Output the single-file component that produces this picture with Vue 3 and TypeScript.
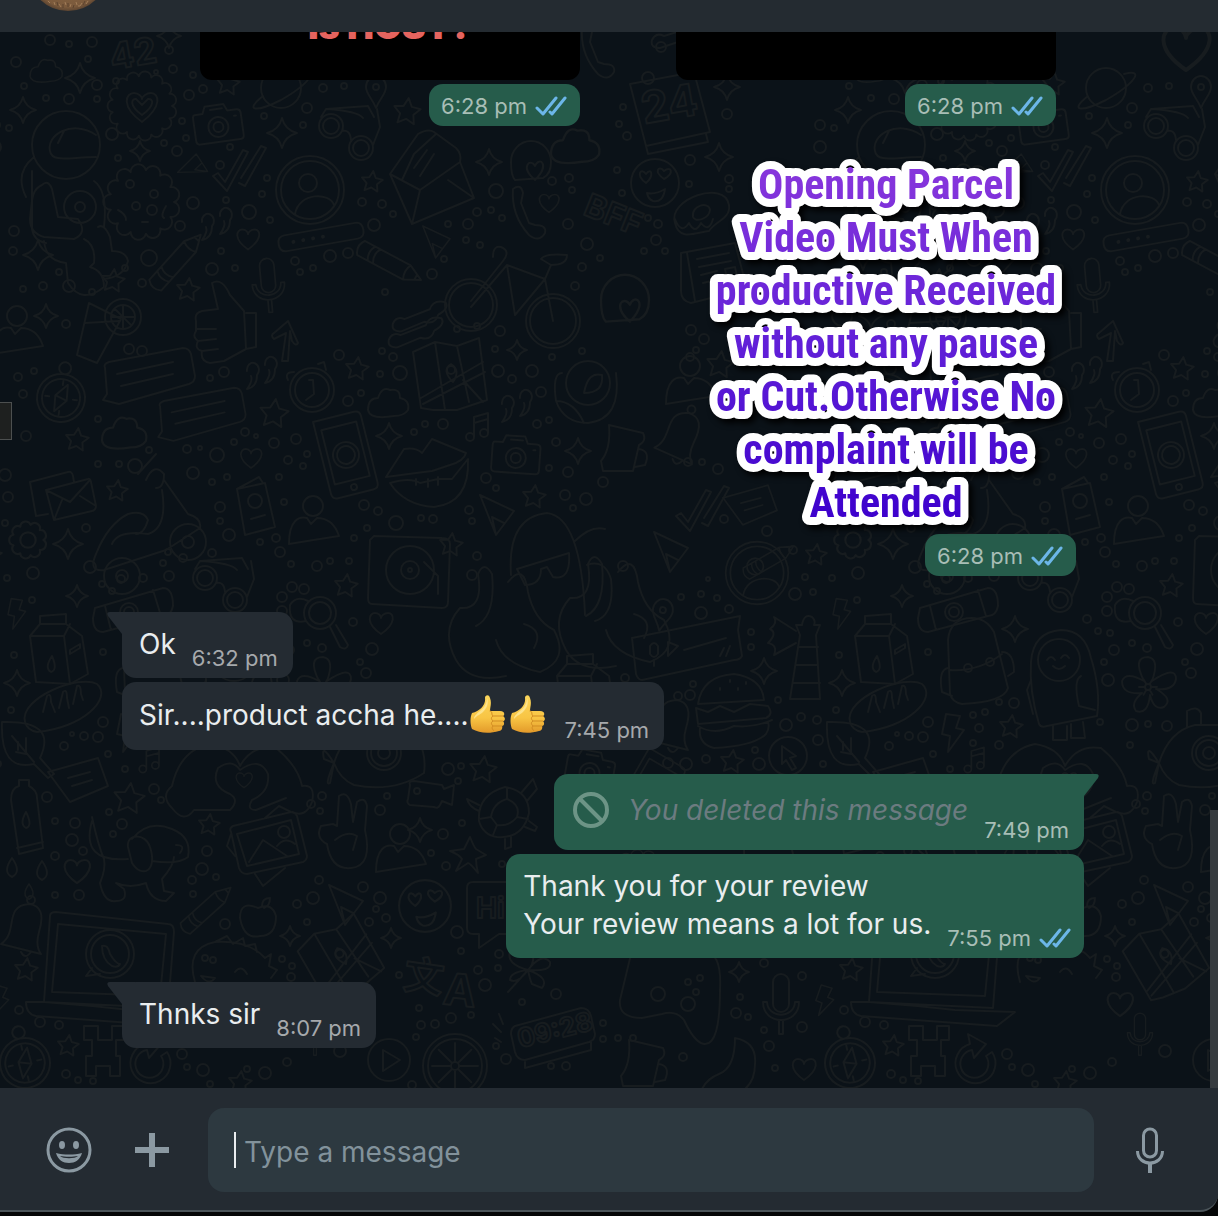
<script setup lang="ts">
import { ref } from 'vue'

interface Message {
  id: number
  side: 'in' | 'out'
  lines: string[]
  time: string
  tail?: boolean
  thumbs?: number
  deleted?: boolean
  read?: boolean
}

const messages: Message[] = [
  { id: 1, side: 'in', lines: ['Ok'], time: '6:32 pm', tail: true },
  { id: 2, side: 'in', lines: ['Sir....product accha he....'], time: '7:45 pm', thumbs: 2 },
  { id: 3, side: 'out', lines: ['You deleted this message'], time: '7:49 pm', tail: true, deleted: true },
  { id: 4, side: 'out', lines: ['Thank you for your review', 'Your review means a lot for us.'], time: '7:55 pm', read: true },
  { id: 5, side: 'in', lines: ['Thnks sir'], time: '8:07 pm', tail: true },
]

const stickerLines = [
  'Opening Parcel',
  'Video Must When',
  'productive Received',
  'without any pause',
  'or Cut.Otherwise No',
  'complaint will be',
  'Attended',
]

const draft = ref('')

/* Wallpaper: line doodles on a tile that repeats sideways. */
const TILE = 825

function starPath(r: number): string {
  const pts: string[] = []
  for (let i = 0; i < 10; i++) {
    const rad = i % 2 ? r * 0.5 : r
    const a = (Math.PI / 5) * i - Math.PI / 2 + 0.12
    pts.push(`${(Math.cos(a) * rad).toFixed(1)} ${(Math.sin(a) * rad).toFixed(1)}`)
  }
  return `M${pts.join('L')}Z`
}
function sparklePath(r: number): string {
  const k = r * 0.2
  return `M0 ${-r}Q${k} ${-k} ${r} 0Q${k} ${k} 0 ${r}Q${-k} ${k} ${-r} 0Q${-k} ${-k} 0 ${-r}Z`
}
function ring(cx: number, cy: number, r: number): string {
  return `M${cx - r} ${cy}a${r} ${r} 0 1 0 ${2 * r} 0a${r} ${r} 0 1 0 ${-2 * r} 0Z`
}
function scallop(n: number, r: number): string {
  let d = `M${r} 0`
  for (let i = 1; i <= n; i++) {
    const a = (2 * Math.PI * i) / n
    const s = (Math.PI * r) / n
    d += `A${s.toFixed(1)} ${s.toFixed(1)} 0 0 1 ${(Math.cos(a) * r).toFixed(1)} ${(Math.sin(a) * r).toFixed(1)}`
  }
  return d + 'Z'
}
function spokes(n: number, r0: number, r1: number): string {
  let d = ''
  for (let i = 0; i < n; i++) {
    const a = (2 * Math.PI * i) / n
    d += `M${(Math.cos(a) * r0).toFixed(1)} ${(Math.sin(a) * r0).toFixed(1)}L${(Math.cos(a) * r1).toFixed(1)} ${(Math.sin(a) * r1).toFixed(1)}`
  }
  return d
}

const heart = 'M0 11C-16 0 -12 -10 -6 -10C-2 -10 0 -7 0 -5C0 -7 3 -10 7 -10C13 -10 16 0 0 11Z'
const pin = 'M0 16C-4 6 -10 2 -10 -5A10 11 0 0 1 10 -5C10 2 4 6 0 16Z' + ring(0, -5, 3)

const shapes: Record<string, string> = {
  heart,
  pin,
  badge: scallop(15, 30) + 'M0 16C-22 0 -16 -13 -8 -13C-3 -13 0 -9 0 -7C0 -9 4 -13 9 -13C17 -13 21 0 0 16ZM0 9C-14 -1 -10 -8 -6 -7L0 -1L6 -7C11 -8 14 -1 0 9Z',
  camera: 'M-22 -12L-14 -12L-11 -19L8 -19L11 -12L20 -12Q24 -12 24 -8V14Q24 18 20 18H-20Q-24 18 -24 14V-8Q-24 -12 -22 -12Z' + ring(0, 3, 10) + ring(0, 3, 5) + 'M-6 -15H6M17 -6H19',
  avatar: ring(0, 0, 34) + ring(0, 0, 29) + ring(-2, -7, 9) + 'M-15 24C-11 2 20 2 24 15',
  glasses: ring(-17, -7, 12) + ring(-17, -7, 8) + ring(13, 15, 12) + ring(13, 15, 8) + 'M-6 -2Q2 -4 3 7M-27 -16L-22 -24L20 -27L26 -16M25 12L32 -6L29 -24M-22 -24Q10 -22 15 -15',
  envelopeOpen: 'M-42 -2L-14 -42Q-4 -48 2 -44L24 -28Q30 -22 28 -14L42 22L-20 48ZM-42 -2L-12 14L28 -14M-12 14L-20 48M16 4L42 22M-30 4L-18 -22L4 -42M-18 -8L-5 -26M-12 0L2 -22',
  envelope: 'M-32 -12L6 -22Q10 -23 11 -18L12 -12M-32 -12L-26 22L-14 20M-16 -4L26 -15Q28 -16 29 -12L34 12Q34 16 30 17L-8 26ZM-16 -4L8 8L28 -14M-8 26L0 6M34 12L18 2',
  pencil: 'M-8 34L-8 -18L0 -34L8 -18L8 34Q0 40 -8 34ZM-8 22Q0 27 8 22M-8 16Q0 21 8 16M-8 -18Q0 -14 8 -18M-3 -28H3',
  mic: 'M-8 -16A8 8 0 0 1 8 -16V6A8 8 0 0 1 -8 6ZM-18 4C-18 28 18 28 18 4L14 4C13 21 -13 21 -14 4ZM-2 22V36H2V22',
  checks: 'M-26 8L-21 5L-14 14L4 -18L9 -16L-12 23ZM2 10L22 -22L27 -20L6 18L0 15',
  astronaut: ring(0, -34, 34) + 'M-16 -28C-20 -44 6 -60 30 -44M-16 -28C-14 -16 4 -22 30 -22M-8 -36L-2 -48M-32 -22Q-52 -6 -40 18M-34 -8V50Q-32 62 -20 64M-24 6C-34 10 -34 20 -36 40Q-36 54 -22 58L8 60Q22 54 12 40L-8 38L-14 10Q-18 0 -24 6M-22 62Q-20 82 0 84L2 104Q16 126 38 108Q38 92 24 88L28 84Q30 66 18 60M38 100Q58 98 62 82Q60 72 46 72L44 58Q38 44 32 48M28 2Q42 12 38 48' + ring(14, 28, 16) + ring(14, 28, 5),
  cookie: scallop(13, 32) + ring(-12, -18, 4) + ring(12, -8, 4) + ring(-6, 4, 4) + ring(10, 8, 5) + 'M-24 8Q-16 12 -16 18M24 4Q18 14 22 16M0 20H6',
  capsule: 'M-36 -8H36Q43 -8 43 0T36 8H-36Q-43 8 -43 0T-36 -8Z' + ring(-28, 0, 1) + ring(-18, 0, 1) + ring(-8, 0, 1) + ring(2, 0, 1),
  bicycle: ring(-40, 18, 26) + ring(-40, 18, 22) + ring(42, 34, 27) + ring(42, 34, 23) + 'M-40 20L-4 -22L34 -8L42 34M-4 -22L4 28L34 -8M-40 14L-8 -26Q0 -36 -10 -40Q-18 -42 -18 -30M30 -28Q34 -34 56 -32Q56 -22 40 -22ZM40 -22L34 -8',
  handset: 'M-16 -24Q-8 -30 -6 -20L-8 -10L0 10L6 12Q18 12 16 20Q10 30 0 22Q-18 2 -16 -24Z',
  earsFace: 'M-20 0A20 21 0 0 1 20 0Q20 12 12 16L-16 18Q-20 14 -20 0ZM4 18C-12 4 0 -4 4 4C8 -6 20 2 4 18Z',
  calendar: 'M-36 -26L28 -38L44 22L-20 36ZM-20 36L-18 44L42 32L40 24' + ring(-18, -32, 6),
  smiley: ring(0, 0, 24) + 'M-9 0C-20 -8 -14 -16 -9 -9C-4 -16 0 -8 -9 0ZM9 -4C-2 -12 4 -18 9 -12C16 -18 20 -10 9 -4ZM-8 10Q0 12 10 6Q8 20 -2 18Q-7 16 -8 10Z',
  donut: 'M-26 10C-34 -14 24 -34 28 -8C30 6 14 8 8 18C-6 20 -22 28 -26 10ZM-8 4C-10 -8 8 -12 9 -3C8 6 -6 10 -8 4ZM-26 6Q-20 22 -12 10Q-6 22 0 10Q8 20 12 6',
  newspaper: 'M-32 -14L22 -24L34 22L-22 36Q-32 34 -32 24ZM-26 -14L-18 34M-16 -8L16 -14M-14 0L18 -6M-12 8L4 4M-10 16L6 12M12 2L22 0L25 14L15 16Z',
  planet: ring(0, 0, 20) + 'M-18 8C-38 24 -24 24 0 12C28 -4 40 -20 18 -14',
  compass: ring(0, 0, 24) + ring(0, 0, 19) + ring(0, -30, 6) + 'M5 -14L6 2L-5 14L-6 -2ZM-6 -2L6 2M-16 0H-12M12 0H16M0 -17V-13M0 17V13',
  cocktail: 'M-8 -30L24 -14L0 30L-20 22ZM-12 -10L22 -12' + ring(26, -16, 18) + ring(26, -16, 12) + 'M26 -28V-4M14 -16H38M18 -24L34 -8',
  thumb: 'M-30 -14Q-32 -22 -24 -24L-8 -26L-14 -52Q-4 -58 4 -40L18 -24L20 14L-2 26L-16 28Q-26 26 -24 16Q-32 14 -28 6Q-34 2 -30 -4ZM-28 6L-10 4M-24 16L-8 14M-30 -6L-10 -6M20 -22H30V12L20 14',
  talk: 'M-42 -14Q-44 -18 -38 -20L36 -34Q42 -34 44 -28L48 -6Q48 0 42 2L-28 22L-44 18L-40 12ZM-30 -8L26 -20M-26 4L26 -8',
  quotes: 'M-12 -2A6 7 0 1 1 -2 2Q-2 14 -12 16Q-6 8 -8 3M6 -8A6 7 0 1 1 16 -4Q16 8 6 10Q12 2 10 -3',
  stopwatch: ring(0, 0, 22) + ring(0, 0, 17) + 'M-3 -10L1 -10L2 4L-6 10M-24 -10Q-28 -18 -18 -18M6 -26L12 -28L14 -20',
  cloud: 'M-20 8Q-20 -4 -10 -4Q-6 -16 2 -12Q12 -14 12 -4Q22 -2 20 8Q16 14 6 14Q-18 18 -20 8Z',
  map: 'M-36 -24L-14 -34L8 -30L30 -38L38 24L8 34L-16 34L-28 32ZM-14 -34L-4 34M8 -30L20 26M-28 22L34 -14M-26 28L36 -4M14 4L34 26' + ring(2, -6, 4) + 'M4 6Q-8 -6 2 -12Q12 -6 4 6',
  phone: 'M-24 -40L18 -40Q24 -40 24 -34V34Q24 40 18 40H-18Q-24 40 -24 34ZM-18 -30H18V26H-18Z' + ring(0, 0, 13) + ring(0, 0, 9) + ring(0, 33, 3),
  lips: 'M-44 4L-26 -24Q-14 -26 -8 -20L2 -34L36 -20Q34 -12 20 -8L2 -2L-14 0ZM-40 10Q-20 4 -10 10L8 6L22 6L38 -14Q40 30 4 34Q-26 32 -40 10ZM-14 6V12M-2 6V14M8 4V12',
  gear: scallop(9, 14) + ring(0, 0, 7),
  passport: 'M-18 -18L10 -24L20 20L-10 28ZM-18 -18L4 -30L8 -24' + ring(0, -6, 7) + 'M-4 12L10 8',
  person: ring(0, -14, 10) + 'M-24 24C-24 0 -14 -4 -6 -2L-2 4L4 -2C14 -2 22 4 26 16Q0 20 -24 24Z',
  turntable: 'M-36 -34L32 -32Q40 -32 40 -26L38 32Q38 38 32 38L-38 34Q-42 34 -42 28L-40 -30Z' + ring(0, 0, 24) + ring(0, 0, 9) + ring(0, 0, 2) + 'M14 -8L28 6V24',
  headShades: 'M-34 20Q-38 -38 2 -42Q36 -38 40 60M-28 14L24 -2Q26 26 8 22L2 12L-4 14Q-4 30 -20 30ZM30 -14Q46 -30 60 -26M42 10Q60 4 66 24Q70 60 50 66',
  triangle: 'M-14 -20L20 -4L2 20ZM-2 2L2 20M-2 2L10 8',
  rose: ring(0, -10, 22) + 'M-26 -20Q-36 -20 -32 8Q-24 30 0 30Q34 26 28 -20M-32 8Q-14 8 -4 30M-4 0Q0 -22 14 -18Q16 0 -4 0',
  arrow: 'M-2 24L2 -4L-10 2Q-14 -2 -10 -4L4 -16L14 6Q12 10 8 4L6 -6L4 24Z',
  wrench: 'M-28 10Q-24 2 -16 6L10 -2Q14 -12 26 -8Q30 -2 18 4Q14 14 4 10L-20 18Q-30 18 -28 10Z',
  scooter: 'M-10 -40L8 -60M-2 -34Q6 -52 16 -40Q16 -26 8 -26M16 -34L40 0Q54 4 52 14L18 36L-44 56Q-60 58 -52 40Q-40 10 -20 0Q-4 -4 0 6Q-4 20 -12 20M14 -24Q20 14 0 20Q-30 16 -36 30' + ring(40, 28, 18) + ring(40, 28, 6) + ring(-26, 62, 18) + ring(-26, 62, 6),
  note: ring(-8, 10, 4) + ring(6, 6, 4) + 'M-4 10V-10L10 -14V6M-4 -4L10 -8',
  lighthouse: 'M-16 42L-6 -22L-10 -32H-4Q-2 -44 6 -40Q10 -36 8 -32H14L10 -22L14 42ZM-8 -10H12M-10 8H12M-12 26H14M-10 -26L-32 -40Q-28 -34 -36 -28Q-28 -24 -38 -14Q-28 -12 -32 -2L-10 -14',
  milk: 'M-28 -14L-18 -26H8L24 -14L30 24L12 34L-22 32ZM-28 -14L6 -14L12 34M6 -14L12 -26M-18 -26V-34L8 -36V-26M-6 6Q-14 18 -7 22Q0 20 -6 6ZM12 0L22 -6V-2L12 4Z',
  bread: 'M-38 16C-44 -8 16 -32 34 -22C50 -8 20 22 -26 26Q-36 24 -38 16ZM-20 6L-16 -10Q-12 -14 -12 -4L-8 6M-4 2L0 -14Q4 -18 4 -8L6 2M10 -2L14 -20Q18 -22 18 -12L20 -6',
  backpack: 'M-26 -20Q-24 -42 -2 -42Q12 -42 20 -28L34 28Q30 42 -12 44Q-22 42 -24 34ZM-24 10Q4 12 28 -6M-26 8Q-36 10 -32 32L-22 36M28 -8Q40 -8 40 12L34 16' + ring(-6, 8, 4) + ring(16, 2, 4),
  spaceman: 'M-22 44Q-32 10 -30 -18Q-28 -48 0 -50Q24 -50 30 -22Q40 10 36 36L-14 46Q-20 48 -22 44Z' + ring(-2, -20, 21) + 'M-14 -20Q-10 -26 -6 -20M0 -22Q4 -28 8 -22M-8 -14Q-2 -8 4 -14M-8 46V60H6V46M10 44V58H24L22 42M20 -4Q12 0 18 26L34 30M-30 0L-34 10L-28 34',
  flower: 'M-4 -6Q-16 -30 0 -30Q12 -28 4 -6Q28 -22 28 -8Q26 4 8 2Q26 12 16 20Q6 24 2 8Q0 28 -12 24Q-18 16 -6 6Q-26 8 -26 -6Q-22 -16 -4 -6Z' + spokes(6, 4, 9) + ring(0, 0, 3),
  burger: 'M-36 -10Q-32 -38 0 -40Q28 -36 30 -14ZM-38 -6L-26 -2L-14 -8L0 -2L16 -10L34 -8Q40 0 32 4L-36 10ZM-36 12Q-20 22 0 12Q20 14 38 6M-34 14Q-36 30 -20 34Q20 32 32 20Q36 14 34 8M-14 -24V-26M-4 -32V-34M4 -24V-26M12 -30V-32',
  bell: 'M-24 12C-6 0 -22 -26 4 -28Q22 -26 14 0Q10 14 16 22ZM-4 20Q0 28 6 20' + ring(6, -32, 4),
  leaf: 'M-26 -28Q30 -30 12 8L26 24L20 28L6 14Q-28 22 -26 -28ZM-16 -14L6 12M-10 -8V0M-2 -12V4L-12 2',
  bolt: 'M-6 -18L8 -16L4 -4L12 -2L-4 20L-2 4L-10 2Z',
  voice: 'M-54 -14L54 -36L52 -22L56 4Q54 8 48 8L-44 28Q-48 28 -50 22ZM-36 -6V2Q-32 8 -28 2V-6Q-32 -12 -36 -6M-32 8V14M-18 -10V4L-8 -6ZM-2 -2L40 -14M34 4L38 -4M40 4L44 -6',
  cursor: ring(0, 0, 19) + 'M-6 -10L8 0L2 2L8 12L4 14L-2 4L-6 8Z',
  submarine: ring(0, 0, 17) + ring(0, 0, 13) + ring(0, 0, 6) + 'M-50 10Q-40 -22 -14 -28H20Q44 -10 40 20Q10 40 -30 32Q-44 26 -50 10M-22 -26V-42Q-12 -48 -8 -40V-28M-50 10Q-64 -12 -60 6ZM-50 10Q-60 34 -54 30Z',
  magnifier: ring(0, 0, 16) + ring(0, 0, 11) + 'M10 14L20 34Q26 38 28 32L16 12M-14 8Q-32 12 -30 -8Q-24 -18 -12 -12' + ring(-38, -2, 5) + ring(-38, -16, 5) + ring(-28, -26, 5) + ring(-16, -24, 5),
  roll: 'M-38 -4L30 -24Q40 -24 40 -6Q38 4 30 4L-30 20Q-40 20 -40 6ZM-28 -6L-22 18M20 -22L28 4' + ring(-4, 0, 9) + ring(-4, 0, 5),
  bottle: 'M-16 -20Q-16 -32 -8 -34V-40H2L2 -34Q10 -30 10 -22L16 28L-8 34ZM-10 28L16 22M-1 -8Q-8 4 -1 8Q6 6 -1 -8Z',
  card: 'M-30 -8L20 -22L30 6L-8 22ZM-10 -2L12 -8M-6 6L14 0',
  dog: 'M-50 -36Q-62 6 -14 2M-50 -40Q-44 -12 -38 2Q-36 12 -42 26Q-38 46 -26 44Q-14 44 -18 32L-26 26Q-12 32 4 26Q8 44 24 44L32 36L22 34L20 22Q32 8 32 0M-14 -10C-16 -24 4 -24 8 -10C16 14 0 22 -10 6ZM-10 -18Q6 -38 30 -28Q50 -20 46 0Q36 8 10 4M34 -12Q44 -12 38 -4',
  picture: 'M-36 -16Q-38 -20 -34 -22L24 -36Q28 -36 30 -32L40 8Q40 12 36 14L-20 26Q-26 26 -28 20ZM-30 -14L24 -28L32 6L-20 18ZM-18 14L-4 -8L20 8M10 -2Q18 -12 28 -4' + ring(17, -16, 6) + 'M-2 -30L12 -42L24 -36M-32 8L-40 -2L-36 -14M-12 26L-4 38L18 20',
  victory: 'M-20 4Q-32 -2 -26 -14L-14 -16L-10 -14L-8 -44Q0 -50 4 -36L6 -18L10 -38Q18 -44 20 -34L18 -10Q26 26 4 28Q-16 30 -20 4ZM-12 0Q0 -10 10 -4L6 10',
  camcorder: 'M-20 -12Q-22 -16 -16 -16L12 -12L14 -8L24 -12L22 8L12 4L10 8Q8 12 4 10L-20 8Q-24 6 -22 2Z' + ring(-13, -6, 3),
  turtle: 'M-26 8Q-28 -18 0 -26Q24 -22 24 0Q18 26 -8 24Q-22 22 -26 8ZM-14 4Q-12 -10 2 -14Q16 -8 12 4Q4 14 -8 12ZM-14 4L-26 6M2 -14V-25M12 4L23 6M-8 12L-12 22M-26 -8L-38 -14Q-36 -6 -26 -2M16 -20L28 -34L32 -24L22 -12M0 26V36L6 34V24M24 8L32 14L30 18L20 14',
  starfish: 'M2 -18Q6 -8 8 -6L18 0L8 4Q8 10 10 18Q2 8 0 8L-12 16L-6 4Q-8 0 -18 -4L-4 -6Z',
  drop: 'M0 -10Q-10 4 0 9Q10 4 0 -10Z',
  laptop: 'M-60 -42Q-60 -46 -54 -46L58 -34Q64 -34 64 -26L58 50L-66 44ZM-52 -34L56 -24L50 38L-58 34ZM-66 44L-84 44Q-84 56 -74 58L62 68L80 54L20 52L-18 48Z' + ring(0, -4, 24) + ring(0, -4, 19) + 'M-18 10L-24 18L-10 16M-8 -12Q-2 -14 0 -4Q6 6 10 6Q8 10 2 8Q-8 2 -8 -12Z',
  dino: 'M-40 12Q-50 -22 -20 -28Q14 -30 30 -12L36 -16L34 -4L42 0L36 8M-20 -28L-8 -34L-2 -26L8 -32L10 -24L20 -26L22 -18M-34 6Q-26 16 -20 8ZM0 2Q6 -6 12 4' + ring(-30, -12, 3) + ring(-22, -10, 3),
  apple: 'M0 -12Q-18 -20 -18 -2Q-14 20 2 16Q18 16 18 -4Q14 -18 0 -12ZM4 -14Q4 -22 12 -22Q12 -14 6 -12',
  citrus: ring(0, 0, 32) + ring(0, 0, 27) + spokes(8, 5, 23) + ring(0, 0, 4),
  play: ring(0, 0, 21) + 'M-6 -10L11 0L-6 11Z',
  invader: 'M-20 -26H-6V-12H8V-26H20V-12H12V4H16V24H6V14H-8V24H-18V4H-12V-12H-20Z',
  redo: 'M-6 -14A20 20 0 1 0 16 -6L10 -2A14 14 0 1 1 -4 -8L-2 0L10 -14L-8 -24Z',
  gamepad: 'M-44 -40Q-30 -60 -10 -40L30 -38Q46 -36 44 0Q44 56 28 54Q18 52 8 30Q0 20 -14 24L-34 28Q-58 28 -56 10Z' + ring(-18, 4, 7) + ring(12, 14, 7) + ring(12, -8, 3) + ring(24, -12, 3) + ring(20, 2, 3),
  jug: 'M-16 -20L18 -12Q22 -4 14 0L8 26H-22L-24 16Q-14 4 -16 -20ZM14 4Q26 6 20 20L10 22',
  boot: 'M0 -36Q22 -32 20 -10Q20 12 2 20L-2 30H-36Q-36 8 -16 0Q0 -6 0 -36Z',
  clover: 'M0 0Q-22 -6 -18 -18L-8 -16Q-6 -28 4 -22Q8 -8 0 0Q14 -18 22 -8Q24 2 0 0Q22 8 14 18L4 14Q2 10 0 0L-20 22M0 0Q-18 2 -18 10Q-10 14 0 0',
  hands: 'M-68 30Q-80 18 -68 8Q-60 -28 -30 -34Q-6 -30 0 -12Q12 -34 36 -30Q58 -12 62 8Q76 6 72 24Q66 40 52 34M-68 30Q-56 46 -46 32H-10Q0 22 -10 16Q-30 8 -22 -10Q-8 -20 0 -8Q20 -22 28 -4Q30 14 12 22Q6 32 16 32L46 20',
  speech: 'M-20 -32H26V20H6L-14 34V20H-20Q-26 20 -26 14V-26Q-26 -32 -20 -32Z',
  clock: 'M-38 -12L28 -30Q36 -30 38 -22L42 -4Q42 2 36 4L-28 22Q-36 22 -38 14L-42 -4Q-42 -10 -38 -12ZM-28 24V30L38 12V4M-52 4L-58 0M-52 -6L-60 -14M-50 -14L-54 -24',
  squid: 'M-44 60Q-60 30 -40 8Q-16 10 -22 -26Q-16 -40 -8 -26Q-4 16 -24 26M8 -18Q24 -38 28 -8Q34 20 54 30Q70 60 40 72Q2 64 -4 40M-44 60Q-30 84 6 76M24 24Q44 30 34 48',
}

type Doodle = [string, number, number, number?, number?]
const doodles: Doodle[] = [
  ['badge', 142, 106], ['camera', 218, 124, 1, -8], ['camera', 516, 455, 1, 4], ['avatar', 310, 190], ['avatar', 757, 573, 0.92],
  ['glasses', 348, 133], ['glasses', 222, 585], ['envelopeOpen', 432, 176], ['envelope', 62, 494], ['pencil', 178, 260, 1, 42],
  ['pencil', 391, 264, 1, 118], ['pencil', 208, 908, 0.9, 48], ['mic', 268, 280, 0.9, -5], ['mic', 781, 998], ['mic', 315, 1030, 0.7],
  ['checks', 239, 168], ['checks', 702, 508], ['astronaut', 66, 179], ['cookie', 142, 202], ['capsule', 321, 237, 1, -10],
  ['bicycle', 511, 287], ['handset', 529, 213], ['earsFace', 531, 162], ['calendar', 666, 110], ['smiley', 655, 183],
  ['smiley', 425, 906, 1.08], ['donut', 701, 213], ['newspaper', 713, 267], ['planet', 281, 88], ['pin', 376, 92], ['pin', 662, 615, 1, 10],
  ['compass', 61, 398, 1, 8], ['compass', 25, 1063, 1.04, -12], ['cocktail', 97, 333], ['thumb', 226, 335], ['talk', 147, 382],
  ['talk', 200, 420, 0.95], ['quotes', 259, 373], ['quotes', 514, 406], ['quotes', 214, 224], ['stopwatch', 312, 390],
  ['cloud', 388, 402], ['cloud', 124, 432, 1.1], ['cloud', 46, 70, 0.8], ['map', 449, 376], ['map', 340, 960, 1, -22], ['phone', 346, 455, 1, -14],
  ['lips', 430, 473], ['gear', 28, 540, 1.1], ['passport', 255, 507], ['person', 17, 330], ['person', 400, 848], ['person', 313, 520],
  ['turntable', 410, 570], ['headShades', 545, 555], ['triangle', 494, 515], ['triangle', 343, 905], ['triangle', 434, 242, 0.8],
  ['triangle', 194, 168, 0.7, -70], ['rose', 588, 393], ['arrow', 284, 337], ['wrench', 420, 312, 1, -4], ['wrench', 416, 328, 1, -4],
  ['scooter', 148, 514], ['note', 478, 427], ['note', 150, 760, 0.9], ['lighthouse', 806, 657], ['milk', 58, 650], ['bread', 63, 706],
  ['backpack', 149, 660], ['spaceman', 236, 680], ['flower', 323, 687], ['burger', 734, 714], ['bell', 672, 728], ['bell', 25, 932],
  ['leaf', 28, 750], ['bolt', 127, 732], ['bolt', 16, 613, 0.8], ['bolt', 824, 1000, 0.8, 8], ['voice', 686, 652], ['cursor', 788, 756],
  ['submarine', 384, 753], ['magnifier', 320, 613], ['roll', 133, 612], ['bottle', 27, 820], ['card', 78, 780], ['dog', 142, 857],
  ['picture', 267, 848], ['victory', 347, 840], ['camcorder', 430, 797], ['turtle', 505, 813], ['starfish', 468, 855],
  ['drop', 12, 868], ['drop', 42, 871], ['drop', 29, 892, 0.8], ['laptop', 110, 958], ['dino', 235, 970], ['apple', 258, 920],
  ['citrus', 455, 1066], ['play', 389, 1060], ['invader', 104, 1052], ['redo', 151, 1058], ['gamepad', 676, 990], ['jug', 645, 1060],
  ['boot', 735, 1074], ['clover', 528, 970], ['hands', 240, 778], ['speech', 493, 914], ['clock', 553, 1038], ['squid', 500, 600],
  ['squid', 610, 590], ['heart', 248, 239, 0.95], ['heart', 549, 203, 0.85], ['heart', 251, 458, 0.9], ['heart', 381, 623],
  ['heart', 77, 871, 1.1], ['heart', 295, 1004, 1.1], ['heart', 804, 1069], ['heart', 244, 780, 0.7], ['phone', 650, 790, 0.9, 30],
  ['camera', 590, 770, 1, 10], ['apple', 580, 880], ['pencil', 770, 560, 0.8, 60], ['backpack', 770, 870], ['cookie', 640, 880, 0.8],
  ['card', 750, 505, 0.9], ['bell', 680, 440, 1, 10], ['jug', 625, 445], ['handset', 598, 52], ['wrench', 680, 30], ['heart', 361, 48, 2],
  ['triangle', 668, 552], ['milk', 585, 690], ['earsFace', 625, 300, 1.2], ['person', 690, 380], ['cloud', 575, 145, 1.2],
]

const stars: [number, number, number][] = [
  [228, 84, 12], [407, 112, 14], [372, 182, 11], [113, 281, 12], [188, 290, 12], [357, 369, 12], [274, 414, 15], [77, 440, 12],
  [117, 491, 11], [534, 497, 12], [346, 586, 12], [451, 545, 12], [186, 727, 12], [732, 762, 12], [129, 799, 16],
  [209, 825, 11], [26, 970, 12], [68, 1046, 11], [240, 1083, 12], [483, 770, 14], [816, 555, 11], [720, 365, 14],
]
const sparkles: [number, number, number][] = [
  [80, 78, 15], [23, 110, 13], [282, 133, 15], [140, 151, 10], [489, 162, 13], [38, 255, 15], [169, 36, 12], [389, 436, 13], [578, 451, 13],
  [517, 350, 10], [68, 544, 15], [77, 596, 11], [764, 671, 13], [17, 683, 13], [190, 629, 13], [727, 87, 13], [719, 157, 14],
  [290, 936, 10], [391, 938, 10], [739, 972, 10], [46, 316, 12], [420, 830, 12],
]
const dots: number[][] = [
  [50, 40, 5], [69, 44, 3], [92, 42, 5], [16, 62, 5], [88, 59, 3], [169, 50, 4], [173, 69, 4], [156, 72, 2], [193, 75, 3], [24, 86, 3],
  [46, 98, 3], [69, 99, 5], [97, 85, 5], [116, 81, 3], [97, 99, 3], [189, 95, 5], [203, 89, 4], [9, 128, 3], [112, 134, 6], [118, 158, 3],
  [164, 143, 3], [177, 151, 5], [182, 121, 3], [186, 138, 3], [220, 165, 4], [230, 147, 3], [267, 178, 3], [262, 194, 3], [226, 200, 3],
  [193, 203, 6], [180, 226, 5], [249, 212, 7], [270, 220, 3], [14, 231, 5], [13, 251, 4], [149, 258, 8], [59, 272, 3], [125, 268, 3],
  [142, 283, 4], [69, 286, 6], [43, 286, 4], [23, 289, 3], [92, 292, 3], [212, 269, 6], [221, 251, 3], [235, 268, 3], [295, 261, 4],
  [300, 272, 3], [313, 268, 3], [330, 256, 6], [348, 253, 5], [374, 225, 6], [362, 202, 4], [382, 204, 4], [393, 214, 3], [432, 274, 5],
  [444, 259, 3], [448, 224, 3], [468, 224, 5], [477, 212, 4], [491, 210, 3], [502, 218, 3], [496, 191, 7], [552, 181, 4], [572, 190, 3],
  [569, 178, 4], [466, 240, 3], [480, 245, 3], [568, 224, 5], [587, 244, 6], [600, 258, 3], [582, 267, 4], [575, 286, 4], [307, 108, 5],
  [264, 116, 3], [303, 125, 3], [323, 88, 4], [344, 86, 3], [385, 292, 3], [66, 324, 4], [129, 349, 5], [142, 351, 5], [18, 377, 4],
  [34, 371, 3], [23, 394, 4], [224, 372, 5], [210, 378, 3], [98, 419, 3], [26, 436, 5], [149, 450, 3], [98, 464, 3], [119, 464, 3],
  [135, 466, 7], [187, 449, 4], [200, 448, 2], [217, 455, 7], [193, 473, 6], [212, 482, 3], [227, 477, 3], [234, 442, 3], [245, 432, 4],
  [256, 436, 2], [274, 443, 5], [296, 439, 5], [307, 454, 3], [288, 460, 4], [303, 466, 3], [279, 477, 3], [339, 355, 5], [382, 351, 3],
  [393, 357, 4], [400, 373, 7], [380, 374, 3], [361, 393, 3], [348, 401, 5], [457, 329, 3], [477, 326, 3], [500, 331, 5], [495, 349, 3],
  [552, 357, 3], [582, 351, 3], [498, 371, 6], [532, 371, 6], [512, 379, 4], [541, 392, 5], [549, 420, 3], [537, 424, 4], [425, 424, 3],
  [443, 424, 5], [414, 432, 3], [556, 442, 4], [568, 472, 5], [549, 468, 3], [486, 478, 5], [496, 488, 3], [8, 497, 5], [5, 475, 6],
  [5, 523, 3], [86, 528, 4], [220, 507, 5], [220, 521, 3], [229, 535, 6], [284, 502, 3], [276, 538, 4], [260, 542, 3], [280, 552, 5],
  [291, 564, 3], [317, 566, 5], [330, 561, 3], [349, 561, 3], [354, 538, 3], [367, 528, 3], [364, 505, 5], [378, 511, 4], [396, 523, 7],
  [421, 518, 3], [433, 519, 4], [469, 510, 4], [472, 521, 3], [565, 495, 5], [586, 499, 6], [573, 508, 3], [603, 482, 5], [477, 556, 4],
  [472, 575, 5], [168, 552, 3], [183, 558, 4], [163, 563, 3], [212, 553, 4], [169, 576, 5], [90, 567, 6], [121, 579, 4], [143, 578, 4],
  [102, 584, 3], [112, 591, 3], [33, 573, 6], [7, 578, 3], [32, 600, 3], [262, 619, 4], [273, 631, 3], [285, 633, 3], [289, 650, 5],
  [322, 648, 4], [307, 643, 3], [279, 662, 3], [283, 680, 6], [353, 622, 4], [372, 649, 6], [366, 673, 5], [360, 662, 3], [307, 725, 6],
  [323, 724, 3], [342, 726, 5], [305, 745, 3], [275, 722, 3], [189, 703, 5], [174, 702, 3], [160, 712, 3], [148, 715, 3], [154, 728, 4],
  [148, 743, 3], [174, 745, 4], [103, 652, 3], [103, 722, 5], [84, 736, 4], [98, 737, 5], [64, 746, 4], [108, 754, 3], [72, 734, 2],
  [11, 710, 3], [14, 655, 3], [623, 566, 5], [681, 597, 3], [701, 594, 3], [717, 598, 3], [701, 613, 6], [729, 609, 4], [708, 579, 2],
  [805, 577, 3], [795, 594, 6], [813, 592, 3], [751, 632, 3], [751, 647, 3], [625, 678, 4], [693, 684, 3], [690, 695, 5], [778, 700, 3],
  [801, 717, 4], [817, 720, 4], [786, 725, 6], [818, 740, 5], [755, 750, 3], [668, 763, 5], [686, 764, 6], [706, 759, 4], [759, 764, 6],
  [823, 764, 3], [47, 797, 5], [55, 821, 3], [75, 823, 5], [72, 840, 6], [83, 851, 4], [55, 856, 4], [55, 895, 3], [79, 895, 5],
  [154, 789, 5], [161, 800, 3], [109, 812, 3], [122, 824, 5], [113, 834, 3], [125, 769, 3], [207, 851, 5], [202, 869, 6], [216, 877, 3],
  [192, 880, 4], [193, 894, 3], [225, 924, 5], [311, 804, 4], [322, 796, 4], [320, 811, 3], [380, 810, 5], [387, 796, 3], [462, 823, 3],
  [443, 834, 5], [431, 853, 3], [446, 866, 4], [502, 864, 3], [319, 880, 4], [313, 898, 6], [297, 904, 4], [307, 922, 3], [363, 887, 5],
  [380, 898, 6], [376, 909, 3], [386, 918, 4], [369, 922, 4], [457, 932, 6], [461, 951, 3], [478, 970, 4], [498, 968, 3], [499, 954, 4],
  [485, 985, 6], [399, 975, 3], [282, 959, 3], [292, 966, 3], [291, 977, 4], [19, 1010, 4], [40, 1022, 5], [59, 1025, 4], [419, 1008, 3],
  [451, 1018, 5], [435, 1024, 4], [421, 1025, 4], [471, 1015, 3], [416, 1037, 3], [496, 1046, 3], [506, 1059, 5], [182, 1054, 5],
  [187, 1067, 3], [203, 1070, 6], [247, 1069, 3], [265, 1073, 6], [287, 1062, 4], [66, 1074, 4], [78, 1080, 3], [93, 1081, 3],
  [210, 1084, 3], [340, 1051, 6], [448, 769, 6], [461, 766, 3], [458, 781, 3], [412, 1085, 4], [764, 963, 4], [802, 976, 4],
  [740, 997, 3], [736, 1013, 5], [748, 1017, 3], [764, 1030, 3], [802, 1027, 5], [769, 1046, 5], [775, 1068, 3], [556, 994, 5],
  [522, 1002, 3], [603, 1023, 3], [603, 1039, 3], [618, 1038, 3], [633, 1038, 3], [683, 1057, 4], [551, 1066, 3], [566, 1066, 4],
  [661, 47, 5], [623, 107, 3], [627, 136, 4], [727, 114, 5], [619, 124, 3], [820, 125, 5], [820, 147, 6], [690, 160, 5], [689, 184, 3],
  [729, 179, 4], [729, 189, 3], [617, 170, 3], [622, 193, 3], [648, 218, 3], [658, 224, 4], [656, 240, 5], [644, 251, 3], [665, 251, 3],
  [691, 330, 5], [704, 339, 5], [690, 357, 4], [696, 350, 3], [688, 462, 4], [702, 462, 3], [718, 469, 5], [724, 519, 4], [767, 531, 5],
  [793, 550, 4],
]
const letters: { t: string; x: number; y: number; s: number; r: number }[] = [
  { t: '42', x: 112, y: 70, s: 36, r: -10 },
  { t: '24', x: 644, y: 124, s: 44, r: -10 },
  { t: 'BFF', x: 582, y: 214, s: 32, r: 22 },
  { t: 'Hi', x: 476, y: 918, s: 28, r: 0 },
  { t: '文', x: 402, y: 988, s: 40, r: 8 },
  { t: 'A', x: 442, y: 1004, s: 44, r: 6 },
  { t: '09:28', x: 520, y: 1048, s: 26, r: -14 },
]
</script>

<template>
  <div class="window">
    <header class="chat-header">
      <svg class="avatar" viewBox="0 0 80 80" role="img" aria-label="Contact photo">
        <defs>
          <radialGradient id="fur" cx="50%" cy="50%" r="50%">
            <stop offset="0" stop-color="#8a6644" />
            <stop offset="0.9" stop-color="#7b5a3c" />
            <stop offset="1" stop-color="#5d4531" />
          </radialGradient>
        </defs>
        <circle cx="40" cy="40" r="40" fill="url(#fur)" />
        <path d="M20 70l2 2M26 71l1 3M31 73l2 3M37 71l1 3M43 73l-1 3M48 71l1 3M54 72l-2 3M60 70l-2 3M51 74l0 2" stroke="#a07c58" />
        <path d="M29 71l1 4M35 73l0 4M40 72l0 4M46 74l-1 3M57 70l-2 4" stroke="#5b432f" />
      </svg>
    </header>

    <main class="chat">
      <svg class="wallpaper" aria-hidden="true">
        <g transform="translate(0 -32)">
          <g id="tile">
            <path
              v-for="(d, i) in doodles"
              :key="'d' + i"
              :d="shapes[d[0]]"
              :transform="`translate(${d[1]} ${d[2]}) rotate(${d[4] ?? 0}) scale(${d[3] ?? 1})`"
            />
            <path v-for="(s, i) in stars" :key="'s' + i" :d="starPath(s[2])" :transform="`translate(${s[0]} ${s[1]})`" />
            <path v-for="(s, i) in sparkles" :key="'k' + i" :d="sparklePath(s[2])" :transform="`translate(${s[0]} ${s[1]})`" />
            <circle v-for="(c, i) in dots" :key="'c' + i" :cx="c[0]" :cy="c[1]" :r="c[2]" />
            <text v-for="l in letters" :key="l.t" :font-size="l.s" :transform="`translate(${l.x} ${l.y}) rotate(${l.r})`">{{ l.t }}</text>
          </g>
          <use href="#tile" :x="TILE" />
          <use href="#tile" :x="-TILE" />
        </g>
      </svg>

      <div class="media-row">
        <figure class="media">
          <div class="picture"><span class="caption">is HOST?</span></div>
          <figcaption class="badge">
            <time>6:28 pm</time>
            <svg class="ticks" viewBox="0 0 32 20"><path d="M2 12l6 6L21 2M15 16l2 2L30 2" /></svg>
          </figcaption>
        </figure>
        <figure class="media">
          <div class="picture"></div>
          <figcaption class="badge">
            <time>6:28 pm</time>
            <svg class="ticks" viewBox="0 0 32 20"><path d="M2 12l6 6L21 2M15 16l2 2L30 2" /></svg>
          </figcaption>
        </figure>
      </div>

      <figure class="sticker-row">
        <svg class="sticker" viewBox="0 0 380 400">
          <defs>
            <linearGradient id="violet" gradientUnits="userSpaceOnUse" x1="0" y1="20" x2="0" y2="390">
              <stop offset="0" stop-color="#8a38dc" />
              <stop offset="0.5" stop-color="#6220d8" />
              <stop offset="1" stop-color="#3c00cc" />
            </linearGradient>
          </defs>
          <text v-for="(line, i) in stickerLines" :key="line" x="190" :y="65 + i * 53" text-anchor="middle">{{ line }}</text>
        </svg>
        <figcaption class="badge">
          <time>6:28 pm</time>
          <svg class="ticks" viewBox="0 0 32 20"><path d="M2 12l6 6L21 2M15 16l2 2L30 2" /></svg>
        </figcaption>
      </figure>

      <ul class="messages">
        <li v-for="m in messages" :key="m.id" class="bubble" :class="[m.side, { tail: m.tail, deleted: m.deleted }]">
          <svg v-if="m.deleted" class="ban" viewBox="0 0 36 36" aria-hidden="true"><circle cx="18" cy="18" r="16" /><path d="M7 7l22 22" /></svg>
          <p class="text">
            <span v-for="(line, i) in m.lines" :key="i" class="line">{{ line
              }}<svg v-for="n in m.thumbs ?? 0" :key="n" class="thumb" viewBox="0 0 40 40" role="img" aria-label="Thumbs up">
                <defs>
                  <linearGradient id="skin" x1="0" y1="0" x2="0" y2="1">
                    <stop offset="0" stop-color="#fbd65c" />
                    <stop offset="0.6" stop-color="#f8c544" />
                    <stop offset="1" stop-color="#e39a2a" />
                  </linearGradient>
                </defs>
                <path fill="url(#skin)" d="M16 3C16 0 20 -1 21 3C23 8 21 12 21 16H31C36 16 36 20 34 21C37 23 36 26 34 26C36 28 35 31 33 31C34 34 32 36 30 36C20 39 10 38 3 34C1 29 1 22 3 18C11 16 17 10 16 3Z" />
                <path fill="#fde38c" d="M18 3C20 8 18 13 14 17C11 20 8 20 5 24C5 20 9 18 12 15C16 12 18 7 18 3Z" />
                <path fill="none" stroke="#d18b22" stroke-linecap="round" d="M24 21H34M24 26H34M24 31H33M21 16C24 16 22 20 24 21C21 23 23 25 24 26C21 28 23 30 24 31C22 33 24 35 25 36" />
              </svg>
            </span>
          </p>
          <span class="meta">
            <time>{{ m.time }}</time>
            <svg v-if="m.read" class="ticks" viewBox="0 0 32 20"><path d="M2 12l6 6L21 2M15 16l2 2L30 2" /></svg>
          </span>
        </li>
      </ul>

      <div class="side-tab"></div>
      <div class="scroll-thumb"></div>
    </main>

    <footer class="composer">
      <button type="button" class="icon" aria-label="Emoji">
        <svg width="46" height="46" viewBox="0 0 46 46">
          <circle cx="23" cy="23" r="21" fill="none" stroke="currentColor" stroke-width="3" />
          <ellipse cx="16" cy="18" rx="3" ry="4" fill="currentColor" />
          <ellipse cx="30" cy="18" rx="3" ry="4" fill="currentColor" />
          <path fill="currentColor" fill-rule="evenodd" d="M10 26C18 28 28 28 36 26C34 33 29 36 23 36S12 33 10 26ZM14 29C17 32 29 32 32 29C27 30 19 30 14 29Z" />
        </svg>
      </button>
      <button type="button" class="icon" aria-label="Attach">
        <svg width="34" height="34" viewBox="0 0 34 34"><path d="M17 0V34M0 17H34" stroke="currentColor" stroke-width="6" /></svg>
      </button>
      <label class="field">
        <span class="caret"></span>
        <input v-model="draft" type="text" placeholder="Type a message" aria-label="Type a message" />
      </label>
      <button type="button" class="icon" aria-label="Voice message">
        <svg width="28" height="46" viewBox="0 0 28 46" fill="none" stroke="currentColor" stroke-width="3">
          <rect x="7.5" y="2" width="13" height="28" rx="6.5" />
          <path d="M1.5 24C1.5 40 26.5 40 26.5 24" />
          <path d="M14 36V46" stroke-width="4" />
        </svg>
      </button>
    </footer>
  </div>
</template>

<style>
body {
  margin: 0;
  background: #000;
}
</style>

<style scoped>
.window {
  display: flex;
  flex-direction: column;
  box-sizing: border-box;
  min-height: 100vh;
  padding-bottom: 4px;
  background: #050607;
  font-family: Inter, 'Noto Sans CJK SC', sans-serif;
  color: #e9edef;
}
.chat-header {
  display: flex;
  align-items: flex-end;
  box-sizing: border-box;
  height: 32px;
  padding: 0 28px 21px;
  overflow: hidden;
  background: #242b31;
}
.avatar {
  flex: none;
  width: 80px;
  height: 80px;
}
.chat {
  position: relative;
  flex: 1;
  padding: 0 134px 40px 122px;
  background: #0b1218;
  overflow: hidden;
}
.wallpaper {
  position: absolute;
  inset: 0;
  width: 100%;
  height: 100%;
  fill: none;
  stroke: #171c1f;
  stroke-width: 2;
  stroke-linejoin: round;
  stroke-linecap: round;
}
.wallpaper text {
  font-family: Inter, 'Noto Sans CJK SC', sans-serif;
  font-weight: 700;
}
.media-row {
  position: relative;
  display: flex;
  justify-content: flex-end;
  gap: 96px;
  margin-right: 28px;
}
.media {
  display: flex;
  flex-direction: column;
  align-items: flex-end;
  gap: 4px;
  width: 380px;
  margin: 0;
}
.picture {
  display: flex;
  align-items: flex-end;
  justify-content: center;
  box-sizing: border-box;
  width: 100%;
  height: 48px;
  padding-bottom: 24px;
  overflow: hidden;
  background: #000;
  border-radius: 0 0 12px 12px;
}
.caption {
  font-size: 36px;
  font-weight: 900;
  line-height: 60px;
  color: #e5645f;
}
.badge {
  display: flex;
  align-items: center;
  gap: 8px;
  box-sizing: border-box;
  height: 42px;
  padding: 2px 13px 0 12px;
  background: #265c4b;
  border-radius: 14px;
}
time {
  font-size: 22px;
  line-height: 24px;
  color: #a6a9ac;
  white-space: nowrap;
}
.badge time,
.out time {
  color: #a8beb6;
}
.ticks {
  width: 32px;
  height: 20px;
  fill: none;
  stroke: #6cb6e8;
  stroke-width: 3;
  stroke-linecap: round;
  stroke-linejoin: round;
}
.sticker-row {
  position: relative;
  display: flex;
  flex-direction: column;
  align-items: flex-end;
  margin: 8px 8px 0 0;
}
.sticker {
  width: 380px;
  height: 400px;
  overflow: visible;
  filter: drop-shadow(4px 4px 3px #000);
}
.sticker text {
  font-family: 'Liberation Sans Narrow', 'Roboto Condensed', 'DejaVu Sans Condensed', sans-serif;
  font-size: 42px;
  font-weight: 700;
  fill: url(#violet);
  stroke: #fff;
  stroke-width: 16px;
  stroke-linejoin: round;
  paint-order: stroke;
}
.messages {
  position: relative;
  display: flex;
  flex-direction: column;
  gap: 4px;
  margin: 36px 0 0;
  padding: 0;
  list-style: none;
}
.bubble {
  position: relative;
  display: flex;
  gap: 16px;
  padding: 13px 15px 8px 17px;
  background: #242b32;
  border-radius: 14px;
}
.in {
  align-self: flex-start;
}
.out {
  align-self: flex-end;
  background: #265c4b;
}
.in + .out,
.out + .in {
  margin-top: 20px;
}
.bubble.tail::before {
  content: '';
  position: absolute;
  top: 0;
  width: 28px;
  height: 22px;
  background: inherit;
}
.in.tail::before {
  left: -15px;
  clip-path: path('M3 0H28V22H15L1 4Q-1 0 3 0Z');
}
.out.tail::before {
  right: -15px;
  clip-path: path('M25 0H0V22H13L27 4Q29 0 25 0Z');
}
.text {
  margin: 0;
  padding-bottom: 7px;
  font-size: 28px;
  line-height: 38px;
}
.line {
  display: flex;
  align-items: center;
  white-space: nowrap;
}
.thumb {
  width: 40px;
  height: 40px;
}
.deleted {
  align-items: center;
  padding: 17px 15px 8px 19px;
}
.deleted .text {
  padding: 0 0 13px 3px;
  font-style: italic;
  color: #6c7b80;
}
.ban {
  width: 36px;
  height: 36px;
  margin-bottom: 13px;
  fill: none;
  stroke: #6d9486;
  stroke-width: 4;
}
.meta {
  display: flex;
  align-items: center;
  align-self: flex-end;
  gap: 8px;
}
.bubble .ticks {
  margin-right: -2px;
}
.side-tab {
  position: absolute;
  top: 370px;
  left: 0;
  box-sizing: border-box;
  width: 12px;
  height: 38px;
  background: #1e201f;
  border: 1px solid #4c4f4f;
  border-left: 0;
}
.scroll-thumb {
  position: absolute;
  right: 0;
  bottom: 0;
  width: 8px;
  height: 278px;
  background: #363b3f;
}
.composer {
  display: flex;
  align-items: center;
  padding: 20px 54px 18px 46px;
  background: #242b32;
  border-bottom: 2px solid #4b5459;
  border-bottom-right-radius: 18px;
}
.icon {
  display: flex;
  padding: 0;
  color: #8b99a2;
  background: none;
  border: 0;
}
.icon + .icon {
  margin-left: 43px;
}
.field {
  display: flex;
  flex: 1;
  align-items: center;
  gap: 8px;
  box-sizing: border-box;
  height: 84px;
  margin: 0 42px 0 39px;
  padding: 0 26px;
  background: #2d3940;
  border-radius: 16px;
}
.caret {
  width: 2px;
  height: 36px;
  background: #e9edef;
}
.field input {
  flex: 1;
  min-width: 0;
  padding: 4px 0 0;
  font: 28px/38px Inter, sans-serif;
  color: #e9edef;
  background: none;
  border: 0;
  outline: 0;
}
.field input::placeholder {
  color: #82929b;
  opacity: 1;
}
</style>
